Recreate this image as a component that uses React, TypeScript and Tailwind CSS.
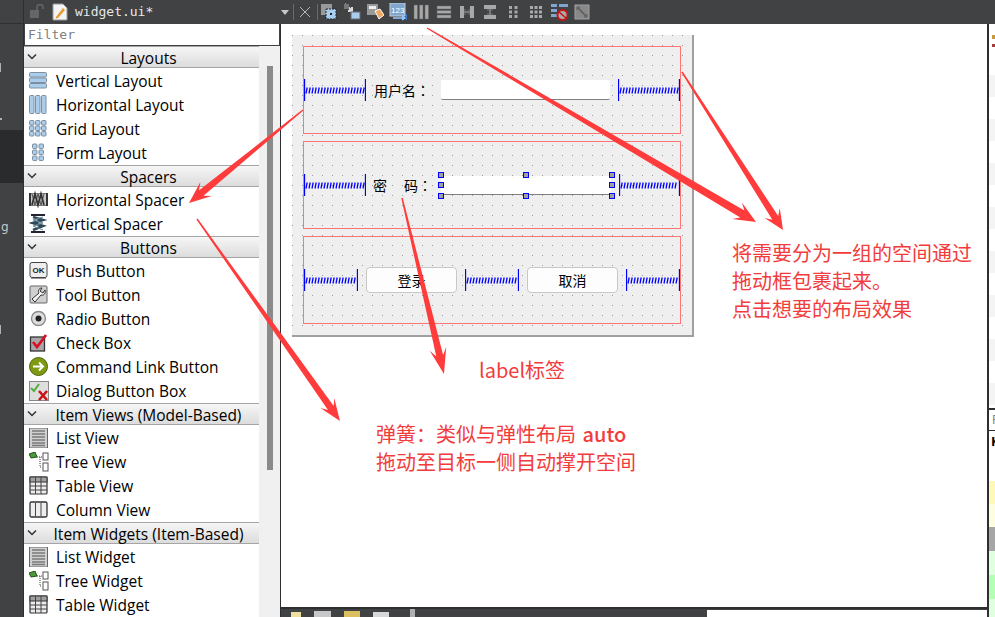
const cjk = "font-['Noto_Sans_CJK_SC','Noto_Sans',sans-serif]";
const ui = "font-['Open_Sans',sans-serif]";
const mono = "font-['DejaVu_Sans_Mono',monospace]";

// tapered annotation arrow, thin at the tail and swept back at the head
function arrowPoints(x1: number, y1: number, x2: number, y2: number, neck: number, head: number, len: number) {
  const d = Math.hypot(x2 - x1, y2 - y1);
  const ux = (x2 - x1) / d;
  const uy = (y2 - y1) / d;
  const at = (back: number, side: number) =>
    `${(x2 - ux * back - uy * side).toFixed(1)},${(y2 - uy * back + ux * side).toFixed(1)}`;
  return [
    at(d, 0.7),
    at(len * 0.72, neck / 2),
    at(len, head / 2),
    `${x2},${y2}`,
    at(len, -head / 2),
    at(len * 0.72, -neck / 2),
    at(d, -0.7),
  ].join(' ');
}

function Arrows() {
  const arrows = [
    [427, 28, 756, 222, 8, 19, 22],
    [682, 72, 783, 230, 7, 18, 20],
    [303, 110, 189, 203, 7, 18, 22],
    [197, 219, 340, 421, 7, 17, 22],
    [402, 198, 444, 374, 7, 17, 26],
  ];
  return (
    <svg className="absolute left-0 top-0 pointer-events-none" width={995} height={617}>
      {arrows.map((a, i) => (
        <polygon key={i} points={arrowPoints(a[0], a[1], a[2], a[3], a[4], a[5], a[6])} fill="#ff3b3b" />
      ))}
    </svg>
  );
}

function Spring({ w }: { w: number }) {
  let d = '';
  for (let x = 2; x < w - 2; x += 3) d += `M${x} 14.5 L${x + 1.2} 8.5 `;
  return (
    <svg width={w} height={22} className="shrink-0">
      <path d={d} stroke="#0000ff" fill="none" strokeWidth="1.3" />
      <path d={`M0.5 0V22M${w - 0.5} 0V22`} stroke="#0000ff" strokeWidth="1.3" />
    </svg>
  );
}

function Handle({ className }: { className: string }) {
  return <div className={`absolute w-[6px] h-[6px] bg-[#a0a0a0] border border-[#0000ff] ${className}`} />;
}

function Button({ label }: { label: string }) {
  return (
    <div className={`w-[91px] h-[26px] shrink-0 rounded-[4px] border border-[#c8c8c8] bg-[#fdfdfd] flex items-center justify-center text-[14px] text-black ${cjk}`}>
      {label}
    </div>
  );
}

function Colon() {
  return <span className="font-['Noto_Sans_CJK_TC',sans-serif]">：</span>;
}

function Form() {
  const group = 'h-[88px] w-[378px] border border-[#ff7474] flex items-center';
  return (
    <div className="w-[402px] h-[302px] border-r-2 border-b-2 border-[#a0a0a0] bg-[#efefef] bg-[radial-gradient(circle_at_0.5px_0.5px,#9a9a9a_0.75px,transparent_0.85px)] bg-[size:10px_10px] pt-[11px] pl-[11px] flex flex-col gap-[7px]">
      <div className={group}>
        <Spring w={62} />
        <span className={`ml-[8px] w-[53px] text-[14px] text-black whitespace-nowrap ${cjk}`}>用户名<Colon /></span>
        <div className="ml-[14px] w-[169px] h-[20px] bg-white border-b border-[#808080] rounded-[2px]" />
        <div className="ml-[8px]"><Spring w={62} /></div>
      </div>
      <div className={group}>
        <Spring w={62} />
        <span className={`ml-[7px] w-[55px] text-[14px] text-black whitespace-nowrap ${cjk}`}>
          密<span className="ml-[17px]">码<Colon /></span>
        </span>
        <div className="relative ml-[13px] w-[170px] h-[19px] bg-white border-b border-[#808080]">
          <Handle className="left-[-3px] top-[-4px]" />
          <Handle className="left-[82px] top-[-4px]" />
          <Handle className="left-[168px] top-[-4px]" />
          <Handle className="left-[-3px] top-[6px]" />
          <Handle className="left-[168px] top-[6px]" />
          <Handle className="left-[-3px] top-[17px]" />
          <Handle className="left-[82px] top-[17px]" />
          <Handle className="left-[168px] top-[17px]" />
        </div>
        <div className="ml-[8px]"><Spring w={61} /></div>
      </div>
      <div className={`${group} gap-2`}>
        <Spring w={54} />
        <Button label="登录" />
        <Spring w={54} />
        <Button label="取消" />
        <Spring w={54} />
      </div>
    </div>
  );
}

const blue = { fill: '#a9cdec', stroke: '#7f8f9f' };

function squares(cols: number[], rows: number[], s: number) {
  return cols.flatMap((x) => rows.map((y) => <rect key={`${x}-${y}`} x={x} y={y} width={s} height={s} rx="1" {...blue} />));
}

function ItemIcon({ name }: { name: string }) {
  let body = null;
  switch (name) {
    case 'Vertical Layout':
      body = [1.5, 7, 12.5].map((y) => <rect key={y} x="0.5" y={y} width="17" height="4.5" rx="1" {...blue} />);
      break;
    case 'Horizontal Layout':
      body = [0.5, 6.5, 12.5].map((x) => <rect key={x} x={x} y="0.5" width="4.5" height="18" rx="1" {...blue} />);
      break;
    case 'Grid Layout':
      body = squares([0.5, 6.5, 12.5], [1.5, 7, 12.5], 4.5);
      break;
    case 'Form Layout':
      body = squares([3.5, 10], [1, 7, 13], 4.5);
      break;
    case 'Horizontal Spacer':
      body = (
        <g stroke="#333" fill="none">
          <rect x="0.5" y="3.5" width="18" height="12" fill="#c8c8c8" stroke="#777" />
          <path d="M1 3V16M18 3V16" strokeWidth="2" />
          <path d="M3 15L6 4L9 15L12 4L15 15" strokeWidth="1.8" />
          <path d="M3 4L6 15L9 4L12 15L15 4" strokeWidth="0.8" />
        </g>
      );
      break;
    case 'Vertical Spacer':
      body = (
        <g fill="none">
          <path d="M2 1H16M2 18H16" stroke="#223" strokeWidth="2" />
          <path d="M4 3L14 6L4 9L14 12L4 16" stroke="#2d4a5a" strokeWidth="2.6" />
          <path d="M14 3L4 6L14 9L4 12L14 16" stroke="#6a8898" strokeWidth="1" />
        </g>
      );
      break;
    case 'Push Button':
      body = (
        <g>
          <rect x="1" y="1.5" width="17" height="15" rx="2" fill="#eee" stroke="#444" />
          <path d="M2 17.5H17" stroke="#999" />
          <text x="9.5" y="12" textAnchor="middle" fontSize="8" fontFamily="Liberation Sans" fontWeight="bold" fill="#222">OK</text>
        </g>
      );
      break;
    case 'Tool Button':
      body = (
        <g>
          <rect x="1" y="1" width="17" height="17" rx="1" fill="#d0d0d0" stroke="#666" />
          <path d="M13 3C9 3 9 7 10 8L3 14L6 17L12 10C15 11 17 8 16 5L14 8L11 6Z" fill="#f2f2f2" stroke="#333" />
        </g>
      );
      break;
    case 'Radio Button':
      body = (
        <g>
          <circle cx="9.5" cy="9.5" r="7" fill="#ddd" stroke="#8a8a8a" strokeWidth="1.4" />
          <circle cx="9.5" cy="9.5" r="3" fill="#222" />
        </g>
      );
      break;
    case 'Check Box':
      body = (
        <g>
          <rect x="1.5" y="4" width="14" height="14" fill="#a8a8a8" stroke="#333" strokeWidth="1.3" />
          <path d="M4 9L8 14L17 2" stroke="#d8102a" strokeWidth="2.8" fill="none" />
        </g>
      );
      break;
    case 'Command Link Button':
      body = (
        <g>
          <circle cx="9.5" cy="9.5" r="9" fill="#7d9a12" stroke="#4d6208" />
          <path d="M4 9.5H13M10 5.5L14 9.5L10 13.5" stroke="#fff" strokeWidth="2" fill="none" />
        </g>
      );
      break;
    case 'Dialog Button Box':
      body = (
        <g>
          <rect x="0.5" y="0.5" width="19" height="19" fill="#dedede" stroke="#888" />
          <path d="M2 7L5 10L10 3" stroke="#4fae3c" strokeWidth="2" fill="none" />
          <path d="M10 10L18 19M18 10L10 19" stroke="#c81414" strokeWidth="2.6" />
        </g>
      );
      break;
    case 'List View':
    case 'List Widget':
      body = (
        <g>
          <rect x="0.5" y="0" width="18" height="20" fill="#d0d0d0" stroke="#666" />
          {[3, 6, 9, 12, 15, 17.5].map((y) => (
            <path key={y} d={`M3 ${y}H16`} stroke="#7a7a7a" strokeWidth="1.5" />
          ))}
        </g>
      );
      break;
    case 'Tree View':
    case 'Tree Widget':
      body = (
        <g>
          <path d="M0 2L6 0L8 5L2 6Z" fill="#4c9a3c" stroke="#22521a" />
          <path d="M8 5H13M11 5V15M11 15H13" stroke="#444" strokeDasharray="1 1" fill="none" />
          <rect x="14" y="1" width="5" height="7" fill="#fff" stroke="#555" />
          <rect x="14" y="11" width="5" height="8" fill="#fff" stroke="#555" />
        </g>
      );
      break;
    case 'Table View':
    case 'Table Widget':
      body = (
        <g>
          <rect x="1" y="1" width="17" height="17" rx="1" fill="#ececec" stroke="#333" strokeWidth="1.2" />
          <rect x="1" y="1" width="17" height="5" fill="#a0a0a0" stroke="#333" />
          <path d="M1 10H18M1 14H18M6.5 1V18M12 1V18" stroke="#444" />
        </g>
      );
      break;
    case 'Column View':
      body = (
        <g>
          <rect x="1" y="2" width="17" height="15" rx="1.5" fill="#eee" stroke="#333" strokeWidth="1.3" />
          <path d="M6.5 3V16M12 3V16" stroke="#444" />
        </g>
      );
      break;
  }
  return (
    <svg width={20} height={20} className="shrink-0">
      {body}
    </svg>
  );
}

const groups = [
  { title: 'Layouts', items: ['Vertical Layout', 'Horizontal Layout', 'Grid Layout', 'Form Layout'] },
  { title: 'Spacers', items: ['Horizontal Spacer', 'Vertical Spacer'] },
  { title: 'Buttons', items: ['Push Button', 'Tool Button', 'Radio Button', 'Check Box', 'Command Link Button', 'Dialog Button Box'] },
  { title: 'Item Views (Model-Based)', items: ['List View', 'Tree View', 'Table View', 'Column View'] },
  { title: 'Item Widgets (Item-Based)', items: ['List Widget', 'Tree Widget', 'Table Widget'] },
];

function WidgetBox() {
  return (
    <div className="w-[256px] shrink-0 flex flex-col overflow-hidden">
      <div className={`mx-px h-[21px] bg-white pl-[3px] text-[13px] leading-[21px] text-[#808080] shrink-0 ${mono}`}>
        Filter
      </div>
      <div className="relative mt-px flex-1 flex bg-white overflow-hidden">
        <div className="w-[235px] shrink-0">
          {groups.map((g) => (
            <div key={g.title}>
              <div className={`relative h-[22px] mb-px pl-[14px] border-y border-[#a5a5a5] bg-gradient-to-b from-[#f6f6f6] to-[#dcdcdc] text-center text-[15.5px] leading-[22px] text-black ${ui}`}>
                <svg width={12} height={8} className="absolute left-[2px] top-[6px]">
                  <path d="M2 1.5L6 5.5L10 1.5" stroke="#333" strokeWidth="1.5" fill="none" />
                </svg>
                {g.title}
              </div>
              {g.items.map((it) => (
                <div key={it} className={`h-[24px] flex items-center pl-[5px] gap-[7px] text-[15.5px] text-black whitespace-nowrap ${ui}`}>
                  <ItemIcon name={it} />
                  <span className="pt-[2px]">{it}</span>
                </div>
              ))}
            </div>
          ))}
        </div>
        <div className="flex-1 bg-[#f0f0f0] pl-[8px] pt-[20px]">
          <div className="w-[6px] h-[404px] bg-[#8a8a8a]" />
        </div>
      </div>
    </div>
  );
}

function ToolIcon({ i }: { i: number }) {
  const g = '#a8a8a8';
  const icons = [
    <g key="0"><rect x="1" y="1" width="11" height="11" fill="#999" /><rect x="6" y="6" width="10" height="10" fill="#a9cdec" stroke="#223" strokeDasharray="2 1" /><rect x="10" y="10" width="2" height="2" fill="#223" /></g>,
    <g key="1"><path d="M2 1L9 8M5 8H9V4" stroke="#ddd" strokeWidth="2" fill="none" /><rect x="1" y="1" width="5" height="5" fill="#777" /><rect x="8" y="9" width="9" height="7" fill="#a9cdec" stroke="#667" /></g>,
    <g key="2"><rect x="1" y="1" width="11" height="11" fill="#999" /><rect x="3" y="3" width="7" height="3" fill="#eee" /><path d="M9 8L14 6L18 12L13 16Z" fill="#f0a860" stroke="#fff" /></g>,
    <g key="3"><rect x="1" y="0" width="15" height="13" fill="#7fa6cc" stroke="#ccd" /><text x="2" y="10" fontSize="8" fontFamily="Liberation Sans" fill="#fff">123</text><path d="M4 15H15M13 13L16 15L13 17" stroke="#9cf" fill="none" strokeWidth="1.4" /><path d="M18 11V17" stroke="#38f" strokeWidth="1.5" /></g>,
    <g key="4">{[2, 7.5, 13].map((x) => <rect key={x} x={x} y="2" width="3.5" height="14" fill={g} stroke="#666" strokeWidth="0.5" />)}</g>,
    <g key="5">{[3, 7.5, 12].map((y) => <rect key={y} x="2" y={y} width="14" height="3" fill={g} stroke="#666" strokeWidth="0.5" />)}</g>,
    <g key="6"><rect x="2" y="3" width="4" height="12" fill={g} /><rect x="12" y="3" width="4" height="12" fill={g} /><path d="M6 9H12" stroke="#777" strokeWidth="2" /><path d="M7 6V12M11 6V12" stroke="#777" /></g>,
    <g key="7"><rect x="3" y="2" width="12" height="4" fill={g} /><rect x="3" y="12" width="12" height="4" fill={g} /><path d="M9 6V12" stroke="#777" strokeWidth="2" /><path d="M6 7H12M6 11H12" stroke="#777" /></g>,
    <g key="8">{[5, 10.5].flatMap((x) => [3, 7.5, 12].map((y) => <rect key={`${x}${y}`} x={x} y={y} width="3" height="3" fill={g} />))}</g>,
    <g key="9">{[3, 7.5, 12].flatMap((x) => [3, 7.5, 12].map((y) => <rect key={`${x}${y}`} x={x} y={y} width="3" height="3" fill={g} />))}</g>,
    <g key="10"><rect x="1" y="1" width="6" height="3" fill="#7fa6cc" /><rect x="9" y="1" width="9" height="3" fill="#7fa6cc" /><rect x="1" y="6" width="6" height="3" fill="#7fa6cc" /><rect x="1" y="11" width="6" height="3" fill="#7fa6cc" /><circle cx="12.5" cy="12" r="5" fill="#aaa" stroke="#c81414" strokeWidth="2" /><path d="M9 9L16 15" stroke="#c81414" strokeWidth="1.6" /></g>,
    <g key="11"><rect x="2" y="2" width="14" height="14" fill="#888" stroke="#a0a0a0" /><path d="M5 5L13 13" stroke="#5a5a5a" strokeWidth="1.6" /><path d="M4 4H7M4 4V7M14 14H11M14 14V11" stroke="#5a5a5a" /></g>,
  ];
  return (
    <svg width={18} height={18} className="shrink-0">
      {icons[i]}
    </svg>
  );
}

function TopBar() {
  return (
    <div className="h-[24px] shrink-0 flex items-center">
      <svg width={14} height={16} className="ml-[6px] shrink-0">
        <rect x="0" y="6" width="9" height="8" fill="#666" />
        <path d="M7 6V3C7 0 13 0 13 3V5" stroke="#666" strokeWidth="1.6" fill="none" />
      </svg>
      <svg width={16} height={18} className="ml-[8px] shrink-0">
        <path d="M1 1H11L15 5V17H1Z" fill="#f4f4f4" stroke="#999" />
        <path d="M4 14L11 5L13 7L6 15L3.5 15.5Z" fill="#e89a2c" />
      </svg>
      <span className={`ml-[7px] w-[204px] text-[13px] text-[#e8e8e8] ${mono}`}>widget.ui*</span>
      <div className="w-0 h-0 border-x-[4.5px] border-x-transparent border-t-[5px] border-t-[#c8c8c8] ml-[2px]" />
      <div className="ml-[4px] w-px h-[16px] bg-[#6a6a6a]" />
      <svg width={12} height={12} className="ml-[5px] shrink-0">
        <path d="M1 1L11 11M11 1L1 11" stroke="#b8b8b8" strokeWidth="1" />
      </svg>
      <div className="ml-[6px] w-px h-[16px] bg-[#6a6a6a]" />
      <div className="ml-[2px] flex gap-[5px]">
        {Array.from({ length: 12 }).map((_, i) => (
          <ToolIcon key={i} i={i} />
        ))}
      </div>
    </div>
  );
}

function BottomBar() {
  return (
    <div className="h-[10px] shrink-0 border-t-2 border-[#2e2f30] flex overflow-hidden">
      <div className="w-[426px] flex items-start pl-[10px] gap-[13px]">
        <div className="w-[10px] h-[6px] mt-[3px] bg-[#f0e0a0]" />
        <div className="w-[17px] h-[6px] mt-[2px] bg-[#c8c8c8]" />
        <div className="w-[16px] h-[6px] mt-[2px] bg-[#dcc060]" />
        <div className="w-[16px] h-[6px] mt-[3px] bg-[#d8d8d8]" />
        <div className="ml-[8px] w-[5px] h-[8px] bg-[#b0b0b0]" />
      </div>
      <div className="flex-1 bg-white mt-px" />
    </div>
  );
}

function RightStrip() {
  return (
    <div className="w-[8px] shrink-0 border-l-2 border-[#2e2f30] bg-white flex flex-col overflow-hidden">
      <div className="h-[51px] shrink-0 pt-[11px] pl-[3px]">
        <div className="w-[3px] h-[4px] bg-[#c89a3c]" />
        <div className="mt-[5px] w-[3px] h-[3px] bg-[#a83c3c]" />
      </div>
      <div className="shrink-0 flex flex-col gap-[22px] mb-[3px]">
        {[0, 1, 2, 3, 4, 5, 6, 7].map((b) => (
          <div key={b} className="h-[22px] bg-[#f4f4f4]" />
        ))}
      </div>
      <div className="shrink-0 h-[22px] border-t-2 border-[#2e2f30] bg-white pl-[3px] text-[12px] leading-[20px] text-[#808080]">F</div>
      <div className="shrink-0 h-[22px] border-t border-[#2e2f30] bg-white pl-[2px] text-[13px] font-bold leading-[20px] text-black">K</div>
      <div className="shrink-0 h-[29px]" />
      <div className="shrink-0 h-[23px] bg-[#fff8b8]" />
      <div className="shrink-0 h-[23px] bg-[#fffde0]" />
      <div className="shrink-0 h-[24px] bg-[#a6a6a6]" />
      <div className="shrink-0 h-[24px] bg-[#dfffdf]" />
      <div className="shrink-0 h-[24px] bg-[#b4ffb4]" />
      <div className="shrink-0 h-[20px] bg-[#dfffdf]" />
    </div>
  );
}

function Sidebar() {
  return (
    <div className="w-[24px] shrink-0 border-r border-[#2e2f30] text-[#c8c8c8]">
      <div className="mt-[23px] h-px bg-[#2e2f30]" />
      <div className="mt-[39px] w-px h-[9px] bg-[#b0b0b0]" />
      <div className="mt-[46px] w-[2px] h-[2px] bg-[#b0b0b0]" />
      <div className="mt-[10px] h-[53px] bg-[#2a2b2d]" />
      <div className="text-[12px] leading-[16px] mt-[36px] pl-px font-['DejaVu_Sans',sans-serif]">g</div>
      <div className="mt-[90px] w-px h-[9px] bg-[#b0b0b0]" />
    </div>
  );
}

export default function App() {
  const note = `absolute text-[20px] leading-[28px] text-[#f23c3c] whitespace-nowrap ${cjk}`;
  return (
    <div className="relative w-[995px] h-[617px] overflow-hidden bg-[#404244] flex">
      <Sidebar />
      <div className="flex-1 flex flex-col">
        <TopBar />
        <div className="flex-1 flex min-h-0">
          <WidgetBox />
          <div className="flex-1 flex flex-col border-l border-[#2e2f30] bg-[#404244]">
            <div className="flex-1 bg-white pt-[11px] pl-[11px]">
              <Form />
            </div>
            <BottomBar />
          </div>
          <RightStrip />
        </div>
      </div>
      <Arrows />
      <div className={`${note} left-[732px] top-[239px]`}>
        <div>将需要分为一组的空间通过</div>
        <div>拖动框包裹起来。</div>
        <div>点击想要的布局效果</div>
      </div>
      <div className={`${note} left-[479px] top-[356px]`}>label标签</div>
      <div className={`${note} left-[376px] top-[420px]`}>
        <div>弹簧：类似与弹性布局 <span className="font-medium ml-[2px]">auto</span></div>
        <div>拖动至目标一侧自动撑开空间</div>
      </div>
    </div>
  );
}
